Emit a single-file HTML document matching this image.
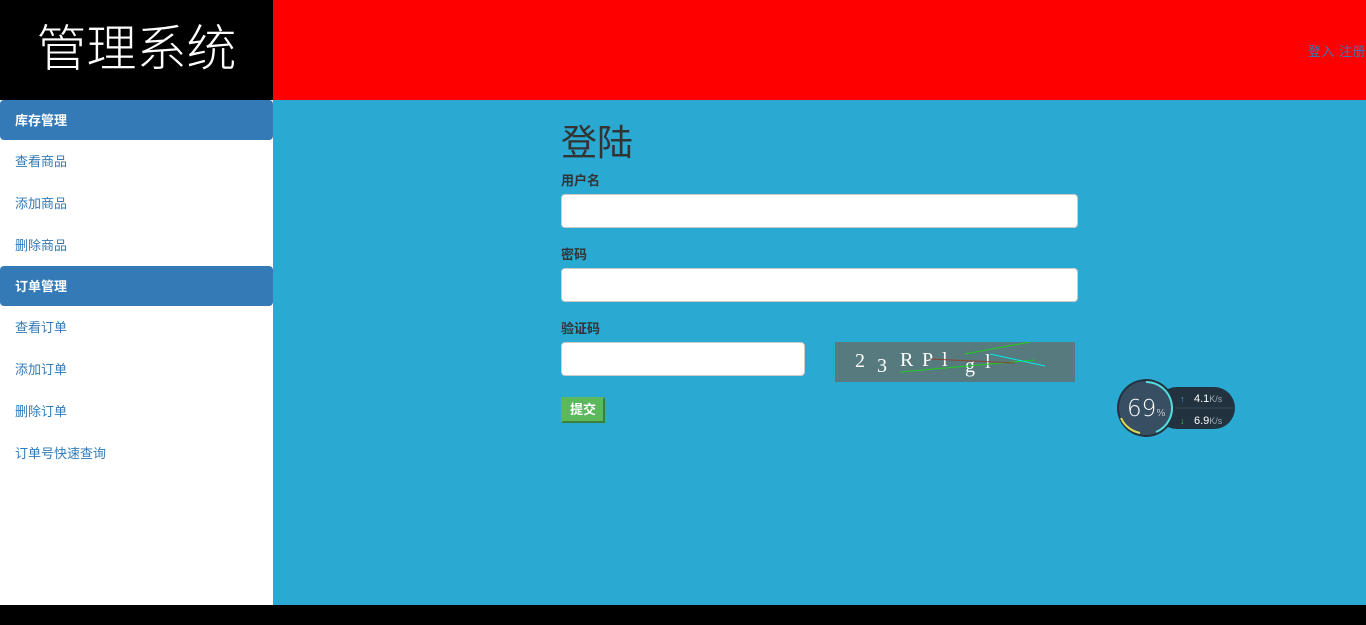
<!DOCTYPE html>
<html><head><meta charset="utf-8"><style>
*{margin:0;padding:0;box-sizing:border-box}
body{width:1366px;height:625px;overflow:hidden;background:#000;font-family:"Liberation Sans","Noto Sans CJK SC",sans-serif;font-size:14px;position:relative}
.logo{position:absolute;left:0;top:0;width:273px;height:100px;background:#000;color:#fff;font-size:50px;text-align:center;line-height:98px;font-weight:300}
.top{position:absolute;left:273px;top:0;width:1093px;height:100px;background:#f00}
.top span{position:absolute;right:0;top:41px;color:#337ab7;font-size:13px;letter-spacing:0.5px}
.side{position:absolute;left:0;top:100px;width:273px;height:505px;background:#fff}
.hd{height:40px;background:#337ab7;color:#fff;border-radius:4px;padding-left:15px;line-height:41px;font-size:13px;font-weight:bold}
.it{height:42px;line-height:44px;padding-left:15px;color:#337ab7;font-size:13px}
.main{position:absolute;left:273px;top:100px;width:1093px;height:505px;background:#2aa9d2}
h1{position:absolute;left:288px;top:14px;font-size:36px;font-weight:normal;color:#333}
label{position:absolute;left:288px;font-size:13px;font-weight:bold;color:#333}
.in{position:absolute;left:288px;height:34px;background:#fff;border:1px solid #ccc;border-radius:4px}
.btn{position:absolute;left:288px;top:297px;width:44px;height:26px;background:#5cb85c;border:2px solid #3d7d3d;border-top-color:#5cb85c;border-left-color:#5cb85c;color:#fff;font-size:13px;font-weight:bold;text-align:center;line-height:22px}
.cap{position:absolute;left:562px;top:242px;width:240px;height:40px;background:#567a7e}
.w{position:absolute;left:843px;top:278px}
</style></head><body>
<div class="logo">管理系统</div>
<div class="top"><span>登入 注册</span></div>
<div class="side">
<div class="hd">库存管理</div>
<div class="it">查看商品</div><div class="it">添加商品</div><div class="it">删除商品</div>
<div class="hd">订单管理</div>
<div class="it">查看订单</div><div class="it">添加订单</div><div class="it">删除订单</div><div class="it">订单号快速查询</div>
</div>
<div class="main">
<h1>登陆</h1>
<label style="top:70px">用户名</label>
<div class="in" style="top:94px;width:517px"></div>
<label style="top:144px">密码</label>
<div class="in" style="top:168px;width:517px"></div>
<label style="top:218px">验证码</label>
<div class="in" style="top:242px;width:244px"></div>
<div class="cap"><svg width="240" height="40">
<g fill="#fff" font-family="Liberation Serif" font-size="20"><text x="20" y="25">2</text><text x="42" y="30">3</text><text x="65" y="24">R</text><text x="87" y="24">P</text><text x="107" y="24">l</text><text x="130" y="30">g</text><text x="150" y="26">l</text></g>
<line x1="65" y1="30" x2="200" y2="18" stroke="#2c2" stroke-width="1"/>
<line x1="130" y1="12" x2="195" y2="0" stroke="#2c2"/>
<line x1="155" y1="12" x2="210" y2="24" stroke="#0ee"/>
<line x1="95" y1="17" x2="180" y2="21" stroke="#843"/>
</svg></div>
<div class="btn">提交</div>
<div class="w"><svg width="120" height="62">
<rect x="40" y="9" width="79" height="42" rx="21" fill="#23323f"/>
<line x1="60" y1="30" x2="119" y2="30" stroke="#34495a"/>
<circle cx="30" cy="30" r="29" fill="#23323f"/><circle cx="30" cy="30" r="27" fill="#384e62"/>
<path d="M30 4 A26 26 0 0 1 40 54" fill="none" stroke="#5dd" stroke-width="2"/>
<path d="M24 55 A26 26 0 0 1 5 40" fill="none" stroke="#dd5" stroke-width="2"/>
<text x="11" y="38" fill="#fff" font-size="23" font-family="DejaVu Sans" font-weight="300">69<tspan font-size="10">%</tspan></text>
<text x="64" y="24" fill="#4ae" font-size="9">↑</text><text x="64" y="46" fill="#3c3" font-size="9">↓</text>
<text x="78" y="24" fill="#fff" font-size="11">4.1<tspan fill="#9ab" font-size="9">K/s</tspan></text>
<text x="78" y="46" fill="#fff" font-size="11">6.9<tspan fill="#9ab" font-size="9">K/s</tspan></text>
</svg></div>
</div>
</body></html>
